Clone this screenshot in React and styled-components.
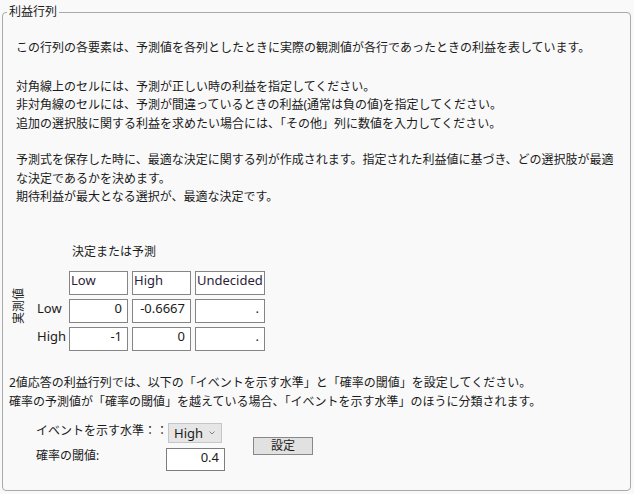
import React from "react";
import styled, { createGlobalStyle } from "styled-components";

const Global = createGlobalStyle`
  html, body { margin: 0; padding: 0; background: #f9f9f9; }
  body {
    font-family: "Noto Sans", "Noto Sans CJK JP", sans-serif;
    color: #1b1b1b;
  }
`;

const Frame = styled.fieldset`
  box-sizing: border-box;
  margin: 4px 3px 0 2px;
  height: 487px;
  padding: 19px 6px 0 6px;
  border: 1px solid #a9a9a9;
  border-radius: 4px;
  min-width: 0;
`;

const Legend = styled.legend`
  font-size: 12px;
  line-height: 16px;
  padding: 0 2px;
  margin-left: -2px;
  color: #1b1b1b;
`;

const Para = styled.p`
  margin: ${(p) => p.$top || 0}px 0 0 ${(p) => (p.$indent ?? 7)}px;
  font-size: 12px;
  line-height: 18.5px;
  white-space: nowrap;
`;

const MatrixTitle = styled.div`
  margin: 36px 0 0 63px;
  font-size: 12px;
  line-height: 18.5px;
`;

const MatrixGrid = styled.div`
  margin: 10px 0 0 4px;
  display: grid;
  grid-template-columns: 20px 28px 59px 59px 70px;
  grid-template-rows: repeat(3, 24px);
  column-gap: 4px;
  row-gap: 4px;
`;

const SideLabel = styled.div`
  grid-column: 1;
  grid-row: 1 / span 3;
  align-self: center;
  justify-self: start;
  padding-top: 10px;
  width: 12px;
  font-size: 12px;
  line-height: 12px;
  writing-mode: vertical-rl;
  text-orientation: sideways;
  transform: rotate(180deg);
  white-space: nowrap;
`;

const RowLabel = styled.div`
  grid-column: 2;
  grid-row: ${(p) => p.$row};
  font-size: 13px;
  line-height: 15px;
  padding-top: 2px;
`;

const Cell = styled.div`
  grid-column: ${(p) => p.$col};
  grid-row: ${(p) => p.$row};
  box-sizing: border-box;
  background: #ffffff;
  border: 1px solid #858585;
  font-size: 13px;
  line-height: 15px;
  padding: 1px ${(p) => (p.$num ? "5px" : "1px")} 0 1px;
  text-align: ${(p) => (p.$num ? "right" : "left")};
  color: ${(p) => (p.$head ? "#2b1d3a" : "#1b1b1b")};
  white-space: nowrap;
  overflow: hidden;
`;

const Controls = styled.div`
  margin: 12px 0 0 27px;
  display: grid;
  grid-template-columns: 130px 61px 86px;
  grid-template-rows: 20px 23px;
  row-gap: 5px;
`;

const CtlLabel = styled.div`
  grid-column: 1;
  font-size: 12px;
  line-height: 15px;
  white-space: nowrap;
`;

const Select = styled.div`
  box-sizing: border-box;
  margin-left: 2px;
  width: 54px;
  height: 20px;
  background: #e6e6e6;
  border: 1px solid #c6c6c6;
  display: flex;
  align-items: center;
  justify-content: space-between;
  padding: 0 6px 0 5px;
  font-size: 13px;
`;

const NumInput = styled.div`
  box-sizing: border-box;
  width: 59px;
  height: 23px;
  background: #ffffff;
  border: 1px solid #7d7d7d;
  font-size: 13px;
  line-height: 15px;
  padding: 1px 5px 0 0;
  text-align: right;
`;

const Button = styled.div`
  grid-column: 3;
  grid-row: 1 / span 2;
  align-self: center;
  justify-self: end;
  box-sizing: border-box;
  width: 60px;
  height: 18px;
  margin-top: -3px;
  background: #e1e1e1;
  border: 1px solid #888888;
  font-size: 12px;
  line-height: 16px;
  text-align: center;
`;

const Chevron = () => (
  <svg width="6" height="4" viewBox="0 0 6 4">
    <path d="M0.5 0.5 L3 3 L5.5 0.5" fill="none" stroke="#808080" strokeWidth="1" />
  </svg>
);

export default function App() {
  return (
    <>
      <Global />
      <Frame>
        <Legend>利益行列</Legend>
        <Para>
          この行列の各要素は、予測値を各列としたときに実際の観測値が各行であったときの利益を表しています。
        </Para>
        <Para $top={20}>
          対角線上のセルには、予測が正しい時の利益を指定してください。
          <br />
          非対角線のセルには、予測が間違っているときの利益(通常は負の値)を指定してください。
          <br />
          追加の選択肢に関する利益を求めたい場合には、「その他」列に数値を入力してください。
        </Para>
        <Para $top={18}>
          予測式を保存した時に、最適な決定に関する列が作成されます。指定された利益値に基づき、どの選択肢が最適
          <br />
          な決定であるかを決めます。
          <br />
          期待利益が最大となる選択が、最適な決定です。
        </Para>

        <MatrixTitle>決定または予測</MatrixTitle>
        <MatrixGrid>
          <SideLabel>実測値</SideLabel>
          <Cell $head $col={3} $row={1}>Low</Cell>
          <Cell $head $col={4} $row={1}>High</Cell>
          <Cell $head $col={5} $row={1}>Undecided</Cell>
          <RowLabel $row={2}>Low</RowLabel>
          <Cell $num $col={3} $row={2}>0</Cell>
          <Cell $num $col={4} $row={2}>-0.6667</Cell>
          <Cell $num $col={5} $row={2}>.</Cell>
          <RowLabel $row={3}>High</RowLabel>
          <Cell $num $col={3} $row={3}>-1</Cell>
          <Cell $num $col={4} $row={3}>0</Cell>
          <Cell $num $col={5} $row={3}>.</Cell>
        </MatrixGrid>

        <Para $top={23} $indent={0}>
          2値応答の利益行列では、以下の「イベントを示す水準」と「確率の閾値」を設定してください。
          <br />
          確率の予測値が「確率の閾値」を越えている場合、「イベントを示す水準」のほうに分類されます。
        </Para>

        <Controls>
          <CtlLabel>イベントを示す水準：：</CtlLabel>
          <Select>
            <span>High</span>
            <Chevron />
          </Select>
          <Button>設定</Button>
          <CtlLabel>確率の閾値:</CtlLabel>
          <NumInput>0.4</NumInput>
        </Controls>
      </Frame>
    </>
  );
}
